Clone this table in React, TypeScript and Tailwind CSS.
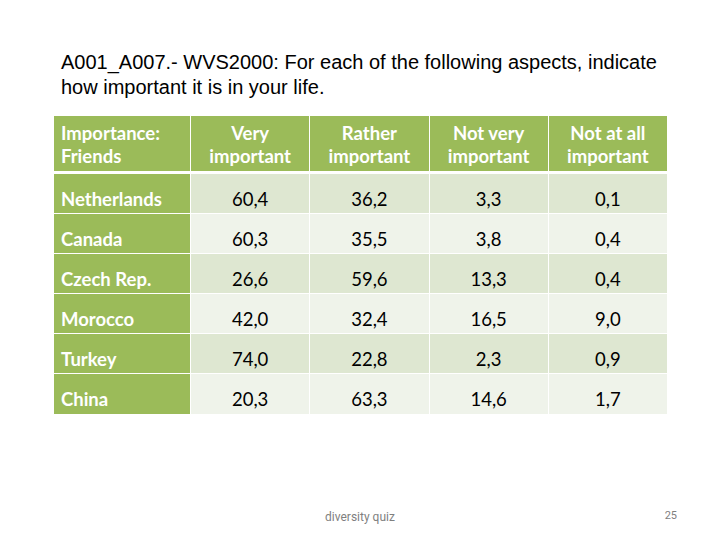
import React from "react";

const rows: [string, string, string, string, string][] = [
  ["Netherlands", "60,4", "36,2", "3,3", "0,1"],
  ["Canada", "60,3", "35,5", "3,8", "0,4"],
  ["Czech Rep.", "26,6", "59,6", "13,3", "0,4"],
  ["Morocco", "42,0", "32,4", "16,5", "9,0"],
  ["Turkey", "74,0", "22,8", "2,3", "0,9"],
  ["China", "20,3", "63,3", "14,6", "1,7"],
];

const heads: [string, string][] = [
  ["Very", "important"],
  ["Rather", "important"],
  ["Not very", "important"],
  ["Not at all", "important"],
];

const App: React.FC = () => {
  return (
    <div className="w-[720px] h-[540px] bg-white relative overflow-hidden">
      <div className="pl-[61px] pt-[50px] pr-[40px] text-[20px] leading-[25px] text-black font-['Liberation_Sans',Arial,sans-serif]">
        A001_A007.- WVS2000: For each of the following aspects, indicate how important it is in your life.
      </div>
      <div className="ml-[54px] mt-[16px] w-[613px] font-['Lato','Noto_Sans',sans-serif] text-[18.5px]">
        <div className="flex h-[55px] bg-[#9bbb59] text-white font-bold leading-[23px] border-b-[3px] border-white box-content">
          <div className="w-[137px] px-[7px] pt-[6px] border-r border-white">
            Importance:
            <br />
            Friends
          </div>
          {heads.map((h, i) => (
            <div
              key={h[0]}
              className={`flex-1 pt-[6px] px-2 text-center ${i < 3 ? "border-r border-white" : ""}`}
            >
              {h[0]}
              <br />
              {h[1]}
            </div>
          ))}
        </div>
        {rows.map((r, ri) => (
          <div
            key={r[0]}
            className={`flex h-[40px] ${ri < rows.length - 1 ? "border-b border-white" : ""} ${
              ri % 2 === 0 ? "bg-[#dee7d1]" : "bg-[#eff3ea]"
            }`}
          >
            <div className="w-[137px] bg-[#9bbb59] text-white font-bold px-[7px] pt-[14px] leading-[22px] border-r border-white">
              {r[0]}
            </div>
            {r.slice(1).map((v, i) => (
              <div
                key={i}
                className={`flex-1 text-center text-black pt-[14px] leading-[22px] ${i < 3 ? "border-r border-white" : ""}`}
              >
                {v}
              </div>
            ))}
          </div>
        ))}
      </div>
      <div className="absolute left-0 right-0 top-[508px] text-center text-[12px] text-[#7f7f7f] font-['Roboto','Liberation_Sans',sans-serif]">
        diversity quiz
      </div>
      <div className="absolute right-[43px] top-[508px] text-[11px] text-[#7f7f7f] font-['Roboto','Liberation_Sans',sans-serif]">
        25
      </div>
    </div>
  );
};

export default App;
